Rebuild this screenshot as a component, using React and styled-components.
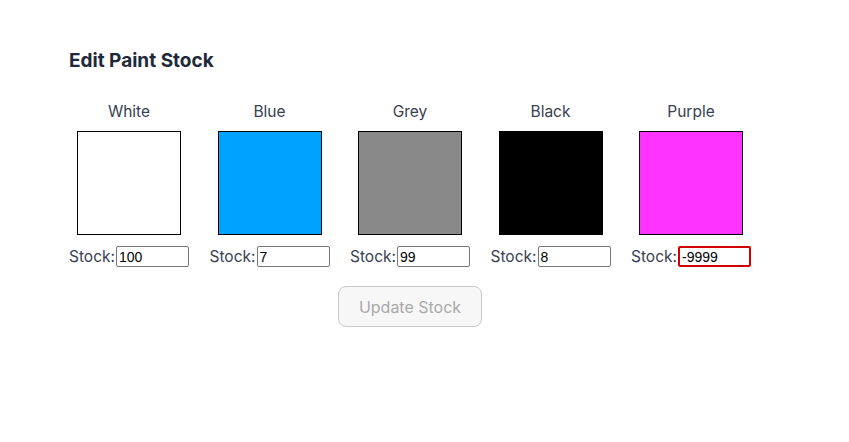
import React, { useState } from 'react'
import styled, { createGlobalStyle } from 'styled-components'

const GlobalStyle = createGlobalStyle`
  body {
    margin: 0;
    background: #ffffff;
    font-family: Inter, "Noto Sans", sans-serif;
    color: #374151;
  }
`

const paints = [
  { name: 'White', color: '#ffffff', stock: '100' },
  { name: 'Blue', color: '#00a2ff', stock: '7' },
  { name: 'Grey', color: '#898989', stock: '99' },
  { name: 'Black', color: '#000000', stock: '8' },
  { name: 'Purple', color: '#ff33ff', stock: '-9999' },
]

function App() {
  const [stock, setStock] = useState(paints.map(p => p.stock))

  return (
    <>
      <GlobalStyle />
      <Page>
        <Title>Edit Paint Stock</Title>
        <Grid>
          {paints.map((p, i) => (
            <Swatch key={p.name}>
              <Name>{p.name}</Name>
              <ColorBox color={p.color} />
              <StockRow>
                Stock:
                <StockInput
                  value={stock[i]}
                  invalid={Number(stock[i]) < 0}
                  onChange={e => {
                    const next = [...stock]
                    next[i] = e.target.value
                    setStock(next)
                  }}
                />
              </StockRow>
            </Swatch>
          ))}
        </Grid>
        <Actions>
          <UpdateButton disabled>Update Stock</UpdateButton>
        </Actions>
      </Page>
    </>
  )
}

export default App

const Page = styled.div`
  padding: 47px 0 0 69px;
  width: 682px;
`

const Title = styled.h2`
  margin: 0 0 28px;
  font-size: 19px;
  line-height: 27px;
  font-weight: 700;
  color: #1e293b;
`

const Grid = styled.div`
  display: flex;
  gap: 20.5px;
`

const Swatch = styled.div`
  width: 120px;
  display: flex;
  flex-direction: column;
  align-items: center;
`

const Name = styled.div`
  font-size: 15.5px;
  line-height: 20px;
  margin-bottom: 9px;
`

const ColorBox = styled.div`
  width: 102px;
  height: 102px;
  background: ${p => p.color};
  border: 1px solid #000;
`

const StockRow = styled.label`
  display: flex;
  align-items: center;
  align-self: stretch;
  margin-top: 11px;
  font-size: 15.5px;
  line-height: 21px;
`

const StockInput = styled.input`
  box-sizing: border-box;
  width: 73px;
  height: 21px;
  margin: 0 0 0 1px;
  padding: 1px 2px;
  font-family: "Liberation Sans", Arial, sans-serif;
  font-size: 14px;
  color: #000;
  border-radius: 2px;
  border: ${p => (p.invalid ? '2px solid #d40000' : '1px solid #767676')};
  outline: none;
`

const Actions = styled.div`
  display: flex;
  justify-content: center;
  margin-top: 19px;
`

const UpdateButton = styled.button`
  width: 144px;
  height: 41px;
  border: 1px solid #c8c8c8;
  border-radius: 8px;
  background: #f7f7f7;
  color: #a9a9a9;
  font-family: Inter, sans-serif;
  font-size: 16px;
`
